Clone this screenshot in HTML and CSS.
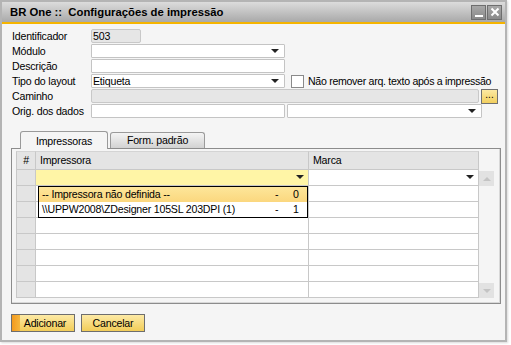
FILE: index.html
```html
<!DOCTYPE html>
<html>
<head>
<meta charset="utf-8">
<link rel="stylesheet" href="styles.css">
</head>
<body>
<div class="window">
  <div class="titlebar">
    <span class="title">BR One :: &nbsp;Configurações de impressão</span>
    <div class="winbtns">
      <span class="wbtn"><svg width="12" height="12" viewBox="0 0 12 12"><rect x="2" y="9" width="8" height="2" fill="#fff"/></svg></span>
      <span class="wbtn"><svg width="12" height="12" viewBox="0 0 12 12"><path d="M2.5 2.5 L9.5 9.5 M9.5 2.5 L2.5 9.5" stroke="#fff" stroke-width="2"/></svg></span>
    </div>
  </div>
  <div class="accent"></div>
  <div class="content">
    <div class="form">
      <div class="row"><span class="lbl">Identificador</span><span class="field ro short">503</span></div>
      <div class="row"><span class="lbl">Módulo</span><span class="field sel w193"><span class="arrow"></span></span></div>
      <div class="row"><span class="lbl">Descrição</span><span class="field w193"></span></div>
      <div class="row"><span class="lbl">Tipo do layout</span><span class="field sel w193">Etiqueta<span class="arrow"></span></span><span class="chk"></span><span class="chklbl">Não remover arq. texto após a impressão</span></div>
      <div class="row"><span class="lbl">Caminho</span><span class="field ro wpath"></span><span class="dots">...</span></div>
      <div class="row"><span class="lbl">Orig. dos dados</span><span class="field w193"></span><span class="field sel w195"><span class="arrow"></span></span></div>
    </div>
    <div class="tabs">
      <span class="tab active">Impressoras</span>
      <span class="tab">Form. padrão</span>
    </div>
    <div class="panel">
      <div class="grid">
        <div class="gh c0">#</div><div class="gh c1">Impressora</div><div class="gh c2">Marca</div><div class="sb"></div>
        <div class="gc c0"></div><div class="gc c1 yellow"><span class="arrow"></span></div><div class="gc c2"><span class="arrow"></span></div><div class="sb"><span class="sbbtn"><span class="up"></span></span></div>
        <div class="gc c0"></div><div class="gc c1"></div><div class="gc c2"></div><div class="sb"></div>
        <div class="gc c0"></div><div class="gc c1"></div><div class="gc c2"></div><div class="sb"></div>
        <div class="gc c0"></div><div class="gc c1"></div><div class="gc c2"></div><div class="sb"></div>
        <div class="gc c0"></div><div class="gc c1"></div><div class="gc c2"></div><div class="sb"></div>
        <div class="gc c0"></div><div class="gc c1"></div><div class="gc c2"></div><div class="sb"></div>
        <div class="gc c0"></div><div class="gc c1"></div><div class="gc c2"></div><div class="sb"></div>
        <div class="gc c0"></div><div class="gc c1"></div><div class="gc c2"></div><div class="sb"><span class="sbbtn"><span class="down"></span></span></div>
        <div class="dropdown">
          <div class="item hl"><span class="name">-- Impressora não definida --</span><span class="dash">-</span><span class="num">0</span></div>
          <div class="item"><span class="name">\\UPPW2008\ZDesigner 105SL 203DPI (1)</span><span class="dash">-</span><span class="num">1</span></div>
        </div>
      </div>
    </div>
    <div class="buttons">
      <span class="btn primary">Adicionar</span>
      <span class="btn">Cancelar</span>
    </div>
  </div>
</div>
</body>
</html>
```

FILE: styles.css
```css
html, body {
  margin: 0;
  padding: 0;
  background: #ffffff;
}
body {
  width: 511px;
  height: 345px;
  overflow: hidden;
  font-family: "Liberation Sans", Arial, sans-serif;
  font-size: 10.6px;
  letter-spacing: -0.2px;
  color: #000;
}
.window {
  width: 503px;
  height: 338px;
  border: 2px solid #b4b4b4;
  background: #f5f5f5;
  box-shadow: 1px 1px 2px rgba(0,0,0,0.15);
}
.titlebar {
  height: 20px;
  background: linear-gradient(#dcdcdc, #a9a9a9);
  display: flex;
  align-items: center;
  justify-content: space-between;
  padding: 0 3px 0 8px;
}
.title {
  font-weight: bold;
  font-size: 11.3px;
  letter-spacing: 0;
  color: #000;
}
.winbtns {
  display: flex;
  gap: 1px;
}
.wbtn {
  width: 13px;
  height: 13px;
  border: 1px solid #6e6e6e;
  background: linear-gradient(#a8a8a8, #8a8a8a);
  display: flex;
  align-items: center;
  justify-content: center;
}
.wbtn svg { display: block; }
.accent {
  height: 2px;
  background: #f5b400;
}
.content {
  padding: 5px 0 0 0;
}
.form {
  margin-left: 10px;
  display: flex;
  flex-direction: column;
  gap: 1px;
}
.row {
  height: 14px;
  display: flex;
  align-items: center;
}
.lbl {
  width: 79px;
  flex: none;
  line-height: 14px;
  white-space: nowrap;
}
.field {
  position: relative;
  box-sizing: border-box;
  height: 14px;
  border: 1px solid #c4c4c4;
  background: #fff;
  line-height: 12px;
  padding-left: 1px;
  border-radius: 1px;
  flex: none;
}
.field.ro {
  background: #e6e6e6;
  border-color: #c8c8c8;
  border-radius: 2px;
}
.short { width: 50px; }
.w193 { width: 194px; }
.w195 { width: 195px; margin-left: 2px; }
.wpath { width: 388px; }
.arrow {
  position: absolute;
  right: 5px;
  top: 4px;
  width: 0;
  height: 0;
  border-left: 4px solid transparent;
  border-right: 4px solid transparent;
  border-top: 4px solid #222;
}
.chk {
  width: 11px;
  height: 11px;
  border: 1px solid #8a8a8a;
  background: #fff;
  margin-left: 6px;
  flex: none;
}
.chklbl {
  margin-left: 4px;
  white-space: nowrap;
  letter-spacing: -0.3px;
}
.dots {
  box-sizing: border-box;
  width: 17px;
  height: 15px;
  margin-left: 2px;
  border: 1px solid #707070;
  background: linear-gradient(#fce9a2, #f2cf5e);
  font-size: 10px;
  line-height: 10px;
  letter-spacing: 0;
  text-align: center;
  flex: none;
}
.tabs {
  margin: 13px 0 0 18px;
  display: flex;
  align-items: flex-end;
  gap: 2px;
  height: 17px;
}
.tab {
  box-sizing: border-box;
  height: 16px;
  border: 1px solid #9a9a9a;
  border-bottom: none;
  border-radius: 3px 3px 0 0;
  background: linear-gradient(#f4f4f4, #d2d2d2);
  text-align: center;
  line-height: 15px;
  width: 95px;
}
.tab.active {
  height: 18px;
  width: 88px;
  background: #f5f5f5;
  margin-bottom: -1px;
  position: relative;
  line-height: 18px;
}
.panel {
  margin-left: 9px;
  width: 490px;
  height: 156px;
  box-sizing: border-box;
  border: 1px solid #8c8c8c;
  box-shadow: inset -1px -1px 0 #d8d8d8;
  padding: 2px 0 0 4px;
}
.grid {
  position: relative;
  display: grid;
  grid-template-columns: 20px 273px 170px 16px;
  grid-template-rows: 19px repeat(8, 16px);
}
.gh {
  background: #e4e4e4;
  border-right: 1px solid #c8c8c8;
  border-bottom: 1px solid #c8c8c8;
  border-top: 1px solid #d4d4d4;
  box-sizing: border-box;
  padding-left: 4px;
  line-height: 17px;
}
.gh.c0 { text-align: center; padding-left: 0; border-left: 1px solid #c8c8c8; }
.gc {
  box-sizing: border-box;
  position: relative;
  background: #fff;
  border-right: 1px solid #c8c8c8;
  border-bottom: 1px solid #c8c8c8;
}
.gc.c0 { background: #e4e4e4; border-left: 1px solid #c8c8c8; }
.gc.yellow { background: #fff5a6; }
.gc .arrow { top: 5px; right: 4px; }
.sb {
  position: relative;
}
.sbbtn {
  position: absolute;
  left: 0;
  width: 15px;
  height: 15px;
  top: 1px;
  background: #e2e2e2;
  display: flex;
  align-items: center;
  justify-content: center;
}
.up {
  width: 0; height: 0;
  border-left: 4px solid transparent;
  border-right: 4px solid transparent;
  border-bottom: 4px solid #c4c4c4;
}
.down {
  width: 0; height: 0;
  border-left: 4px solid transparent;
  border-right: 4px solid transparent;
  border-top: 4px solid #c4c4c4;
}
.dropdown {
  position: absolute;
  left: 22px;
  top: 35px;
  width: 270px;
  box-sizing: border-box;
  border: 1px solid #000;
  background: #fff;
}
.item {
  height: 15px;
  line-height: 15px;
  display: flex;
  padding-left: 3px;
}
.item.hl { background: linear-gradient(#fde69a, #fbd77e); }
.item .name { flex: 1; white-space: nowrap; }
.item .dash { width: 18px; }
.item .num { width: 14px; }
.buttons {
  margin: 10px 0 0 9px;
  display: flex;
  gap: 6px;
}
.btn {
  box-sizing: border-box;
  width: 64px;
  height: 18px;
  border: 1px solid #6e6e6e;
  background: linear-gradient(#fdeaa6, #f2cd58);
  text-align: center;
  line-height: 16px;
}
.btn.primary {
  background: linear-gradient(90deg, #f39a1e 0, #f6b63e 8px, transparent 8px), linear-gradient(#fdeaa6, #f2cd58);
  padding-left: 4px;
}
```
